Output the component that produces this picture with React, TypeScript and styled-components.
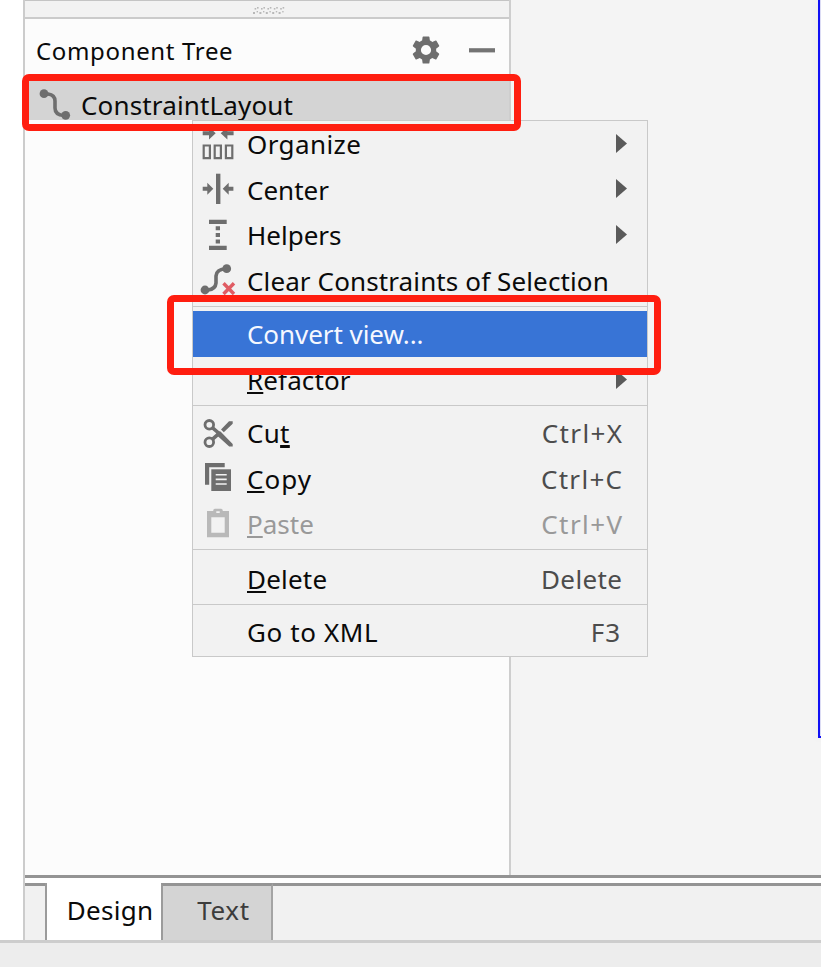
import React from 'react';
import styled, { createGlobalStyle } from 'styled-components';

const GlobalStyle = createGlobalStyle`
  *, *::before, *::after { box-sizing: border-box; }
  body { margin: 0; background: #ffffff; font-family: "Noto Sans", "Open Sans", sans-serif; color: #0a0a0a; }
`;

const Window = styled.div`
  position: relative;
  display: flex;
  flex-direction: column;
  width: 821px;
  height: 967px;
  overflow: hidden;
  background: #ffffff;
`;

const Editor = styled.div`
  display: flex;
  flex-direction: column;
  height: 940px;
  margin-left: 23px;
  border-left: 2px solid #cccccc;
`;

const Workspace = styled.div`
  display: flex;
  height: 875px;
`;

const TreePanel = styled.section`
  display: flex;
  flex-direction: column;
  width: 486px;
  border-right: 2px solid #cecece;
  background: #fcfcfc;
`;

const Splitter = styled.div`
  display: flex;
  justify-content: center;
  height: 19px;
  padding-left: 3px;
  border-top: 1px solid #c4c4c4;
  border-bottom: 2px solid #cbcbcb;
  background: #f2f2f2;
`;

const PanelHeader = styled.header`
  display: flex;
  align-items: center;
  height: 60px;
  padding: 3px 14px 0 11px;
`;

const Label = styled.span<{ $size?: number; $spacing?: number }>`
  font-size: ${(p) => p.$size ?? 26}px;
  letter-spacing: ${(p) => p.$spacing ?? 0}px;
  line-height: 36px;
  white-space: pre;
`;

const HeaderActions = styled.div`
  display: flex;
  align-items: center;
  gap: 26px;
  margin-left: auto;
  padding-bottom: 1px;
`;

const TreeRow = styled.div`
  display: flex;
  align-items: center;
  height: 41px;
  padding: 11px 0 0 11px;
  gap: 9px;
  background: #d4d4d4;
`;

const Canvas = styled.main`
  display: flex;
  flex: 1;
  justify-content: flex-end;
  background: #f4f4f4;
`;

const DeviceEdge = styled.div`
  width: 3px;
  height: 738px;
  border-left: 2px solid #1010f4;
  border-bottom: 2px solid #1010f4;
  background: #dcdcf4;
  box-shadow: 0 0 8px rgba(0, 0, 0, 0.08);
`;

const TabStrip = styled.nav`
  display: flex;
  height: 65px;
  padding-top: 8px;
  border-top: 3px solid #949494;
  background: #ffffff;
`;

const StripFill = styled.div<{ $width?: number }>`
  ${(p) => (p.$width ? `width: ${p.$width}px;` : 'flex: 1;')}
  margin-top: -3px;
  border-top: 3px solid #949494;
  background: #f1f1f1;
`;

const Tab = styled.div<{ $active?: boolean }>`
  display: flex;
  align-items: center;
  justify-content: center;
  width: ${(p) => (p.$active ? 116 : 112)}px;
  margin-top: -3px;
  padding: ${(p) => (p.$active ? '0 0 4px 12px' : '0 0 7px 13px')};
  border-left: 2px solid #9b9b9b;
  ${(p) => !p.$active && 'border-top: 3px solid #949494; border-right: 2px solid #a4a4a4;'}
  background: ${(p) => (p.$active ? '#ffffff' : '#d4d4d4')};
  color: ${(p) => (p.$active ? '#0a0a0a' : '#3c3c3c')};
`;

const StatusBar = styled.footer`
  height: 27px;
  border-top: 3px solid #cdcdcd;
  background: #ededed;
`;

const Menu = styled.div`
  position: absolute;
  left: 192px;
  top: 120px;
  width: 456px;
  height: 537px;
  padding-top: 1px;
  border: 1px solid #c9c9c9;
  background: #f2f2f2;
`;

const MenuRow = styled.div<{ $height: number; $raised?: boolean; $selected?: boolean; $disabled?: boolean }>`
  display: flex;
  align-items: center;
  height: ${(p) => p.$height}px;
  padding-right: 20px;
  padding-bottom: ${(p) => (p.$raised ? 2 : 0)}px;
  background: ${(p) => (p.$selected ? '#3874d6' : 'transparent')};
  color: ${(p) => (p.$selected ? '#f6f8ff' : p.$disabled ? '#999999' : '#0a0a0a')};
`;

const IconSlot = styled.div`
  align-self: flex-start;
  width: 54px;
  height: 43px;
  flex: none;
`;

const Shortcut = styled(Label)<{ $disabled?: boolean; $inset?: number }>`
  margin-left: auto;
  margin-right: ${(p) => (p.$inset ?? 5) - (p.$spacing ?? 0)}px;
  color: ${(p) => (p.$disabled ? '#999999' : '#4c4c4c')};
`;

const Arrow = styled.svg`
  display: block;
  margin: 0 0 2px auto;
`;

const Separator = styled.div<{ $before: number; $after: number }>`
  height: 1px;
  margin: ${(p) => p.$before}px 0 ${(p) => p.$after}px;
  background: #c9c9c9;
`;

const Mnemonic = styled.span<{ $bold?: boolean }>`
  text-decoration: underline;
  text-decoration-skip-ink: none;
  text-decoration-thickness: ${(p) => (p.$bold ? 3 : 1.5)}px;
  text-underline-offset: 2px;
`;

const Highlight = styled.div<{ $x: number; $y: number; $w: number; $h: number }>`
  position: absolute;
  left: ${(p) => p.$x}px;
  top: ${(p) => p.$y}px;
  width: ${(p) => p.$w}px;
  height: ${(p) => p.$h}px;
  border: 7px solid #ff1e10;
  border-radius: 7px;
`;

const Grip = styled.svg`
  display: block;
  margin-top: 5px;
`;

const G = '#6e6e6e';

const GripIcon = () => (
  <Grip width="34" height="10" viewBox="0 0 34 10" fill="#b8b8b8">
    {[0, 1, 2, 3, 4].map((i) => (
      <g key={i}>
        <rect x={1 + i * 6.4} y="6" width="2" height="2" />
        <rect x={2.6 + i * 6.4} y="2" width="1.6" height="1.6" />
        <rect x={5 + i * 6.4} y="1" width="1.6" height="1.6" />
        <rect x={4.6 + i * 6.4} y="5" width="1.4" height="1.4" />
      </g>
    ))}
  </Grip>
);

const GearIcon = () => (
  <svg width="34" height="34" viewBox="0 0 24 24" fill={G}>
    <path d="M19.14 12.94c.04-.3.06-.61.06-.94 0-.32-.02-.64-.07-.94l2.03-1.58a.49.49 0 0 0 .12-.61l-1.92-3.32a.488.488 0 0 0-.59-.22l-2.39.96c-.5-.38-1.03-.7-1.62-.94l-.36-2.54a.484.484 0 0 0-.48-.41h-3.84c-.24 0-.43.17-.47.41l-.36 2.54c-.59.24-1.13.57-1.62.94l-2.39-.96c-.22-.08-.47 0-.59.22L2.74 8.87c-.12.21-.08.47.12.61l2.03 1.58c-.05.3-.09.63-.09.94s.02.64.07.94l-2.03 1.58a.49.49 0 0 0-.12.61l1.92 3.32c.12.22.37.29.59.22l2.39-.96c.5.38 1.03.7 1.62.94l.36 2.54c.05.24.24.41.48.41h3.84c.24 0 .44-.17.47-.41l.36-2.54c.59-.24 1.13-.56 1.62-.94l2.39.96c.22.08.47 0 .59-.22l1.92-3.32c.12-.22.07-.47-.12-.61l-2.01-1.58zM12 15.6A3.6 3.6 0 1 1 12 8.4a3.6 3.6 0 0 1 0 7.2z" />
  </svg>
);

const MinusIcon = () => (
  <svg width="26" height="6" viewBox="0 0 26 6">
    <rect y="1.2" width="26" height="4.2" fill="#747474" />
  </svg>
);

const LayoutIcon = () => (
  <svg width="36" height="34" viewBox="0 0 36 34">
    <path d="M8 6H12Q19 7 19 13V20Q19 27 28 27.5" fill="none" stroke={G} strokeWidth="3.6" />
    <circle cx="8" cy="5.7" r="4.4" fill={G} />
    <circle cx="29.7" cy="27.3" r="4.4" fill={G} />
  </svg>
);

const Glyph = ({ children, fill = G }: { children: React.ReactNode; fill?: string }) => (
  <svg width="54" height="43" viewBox="0 0 54 43" fill={fill}>{children}</svg>
);

const OrganizeIcon = () => (
  <Glyph>
    <path d="M9.7 9.2H16V5L22.7 11.2 16 17.4V13.2H9.7ZM40.6 9.2H34.4V5L27.7 11.2 34.4 17.4V13.2H40.6Z" />
    <path d="M10.7 23.5h6.2v12.6h-6.2ZM21.7 23.5h6.2v12.6h-6.2ZM32.9 23.5h6.4v12.6h-6.4Z" fill="none" stroke={G} strokeWidth="2.2" />
  </Glyph>
);

const CenterIcon = () => (
  <Glyph>
    <rect x="23" y="5.7" width="4.4" height="30.3" />
    <path d="M9.7 18.7H14.3V14.7L20.3 20.7 14.3 26.7V22.7H9.7ZM40.4 18.7H35.7V14.7L29.7 20.7 35.7 26.7V22.7H40.4Z" />
  </Glyph>
);

const HelpersIcon = () => (
  <Glyph>
    <path d="M16 6.7h17.7v4.2H16ZM16 32.7h17.7v4.2H16ZM22.7 13.3H27v4h-4.3ZM22.7 20H27v4h-4.3ZM22.7 26.4H27v4h-4.3Z" />
  </Glyph>
);

const ClearIcon = () => (
  <Glyph>
    <path d="M12 31H15Q22.5 30 23 24V17Q23.5 10 33 9.7" fill="none" stroke={G} strokeWidth="3.6" />
    <circle cx="12" cy="31" r="4.4" />
    <circle cx="33.7" cy="9.7" r="4.4" />
    <path d="M30.5 24.2 41 35M41 24.2 30.5 35" stroke="#e05c63" strokeWidth="3.4" />
  </Glyph>
);

const CutIcon = () => (
  <Glyph>
    <g fill="none" stroke={G}>
      <circle cx="16.3" cy="13.8" r="4.3" strokeWidth="2.8" />
      <circle cx="16.3" cy="31.2" r="4.3" strokeWidth="2.8" />
      <path d="M19.3 16.6 28 24M19.3 28.4 27 21.6" strokeWidth="3.6" />
    </g>
    <path d="M24 20.5 27.5 20.5 39.7 33V35.5H36.2L23.5 24ZM28 18.6 36 10.3H39.7V12.7L30.8 21.3Z" />
  </Glyph>
);

const CopyIcon = () => (
  <Glyph>
    <path d="M12 6H31.7V10.2H16.2V27.7H12Z" />
    <path d="M18.3 12.3H38V34H18.3Z" />
    <path d="M22.7 17h11v1.6h-11ZM22.7 21.6h11v1.6h-11ZM22.7 26.2h11v1.6h-11Z" fill="#f2f2f2" />
  </Glyph>
);

const PasteIcon = () => (
  <Glyph fill="#b9b9b9">
    <path fillRule="evenodd" d="M14 9H20.3V7.7L21.7 6.7H28.3L29.7 7.7V9H36V35.3H14ZM18.3 15.3V30.7H31.7V15.3ZM23.3 9.2V11H26.7V9.2Z" />
  </Glyph>
);

type ItemProps = {
  height: number;
  icon?: React.ReactNode;
  children: React.ReactNode;
  spacing?: number;
  shortcut?: string;
  shortcutSpacing?: number;
  shortcutInset?: number;
  submenu?: boolean;
  selected?: boolean;
  disabled?: boolean;
  raised?: boolean;
};

const MenuItem = ({ height, icon, children, spacing, shortcut, shortcutSpacing, shortcutInset, submenu, selected, disabled, raised }: ItemProps) => (
  <MenuRow $height={height} $selected={selected} $disabled={disabled} $raised={raised}>
    <IconSlot>{icon}</IconSlot>
    <Label $spacing={spacing}>{children}</Label>
    {shortcut && (
      <Shortcut $spacing={shortcutSpacing} $inset={shortcutInset} $disabled={disabled}>{shortcut}</Shortcut>
    )}
    {submenu && (
      <Arrow width="11" height="19" viewBox="0 0 11 19"><path d="M0 0 11 9.5 0 19Z" fill="#5a5a5a" /></Arrow>
    )}
  </MenuRow>
);

export default function App() {
  return (
    <Window>
      <GlobalStyle />
      <Editor>
        <Workspace>
          <TreePanel>
            <Splitter><GripIcon /></Splitter>
            <PanelHeader>
              <Label $size={24} $spacing={0.65}>Component Tree</Label>
              <HeaderActions><GearIcon /><MinusIcon /></HeaderActions>
            </PanelHeader>
            <TreeRow>
              <LayoutIcon />
              <Label $spacing={0.15}>ConstraintLayout</Label>
            </TreeRow>
          </TreePanel>
          <Canvas><DeviceEdge /></Canvas>
        </Workspace>
        <TabStrip>
          <StripFill $width={20} />
          <Tab $active><Label $spacing={0.3}>Design</Label></Tab>
          <Tab><Label $spacing={0.7}>Text</Label></Tab>
          <StripFill />
        </TabStrip>
      </Editor>
      <StatusBar />

      <Menu>
        <MenuItem height={46} icon={<OrganizeIcon />} spacing={0.4} submenu raised>Organize</MenuItem>
        <MenuItem height={45} icon={<CenterIcon />} submenu raised>Center</MenuItem>
        <MenuItem height={46} icon={<HelpersIcon />} submenu raised>Helpers</MenuItem>
        <MenuItem height={45} icon={<ClearIcon />} spacing={0.12} raised>Clear Constraints of Selection</MenuItem>
        <Separator $before={2} $after={4} />
        <MenuItem height={46} spacing={-0.06} selected>Convert view...</MenuItem>
        <MenuItem height={46} spacing={0.12} submenu><Mnemonic>R</Mnemonic>efactor</MenuItem>
        <Separator $before={2} $after={5} />
        <MenuItem height={46} icon={<CutIcon />} spacing={0.3} shortcut="Ctrl+X" shortcutSpacing={1.4} raised>Cu<Mnemonic $bold>t</Mnemonic></MenuItem>
        <MenuItem height={45} icon={<CopyIcon />} spacing={1} shortcut="Ctrl+C" shortcutSpacing={1.3} raised><Mnemonic>C</Mnemonic>opy</MenuItem>
        <MenuItem height={46} icon={<PasteIcon />} shortcut="Ctrl+V" shortcutSpacing={1.4} disabled raised><Mnemonic>P</Mnemonic>aste</MenuItem>
        <Separator $before={1} $after={7} />
        <MenuItem height={45} spacing={0.2} shortcut="Delete" shortcutSpacing={0.4} raised><Mnemonic>D</Mnemonic>elete</MenuItem>
        <Separator $before={2} $after={5} />
        <MenuItem height={46} spacing={0.6} shortcut="F3" shortcutSpacing={0.8} shortcutInset={7} raised>Go to XML</MenuItem>
      </Menu>

      <Highlight $x={22} $y={74} $w={499} $h={57} />
      <Highlight $x={167} $y={295} $w={494} $h={80} />
    </Window>
  );
}
